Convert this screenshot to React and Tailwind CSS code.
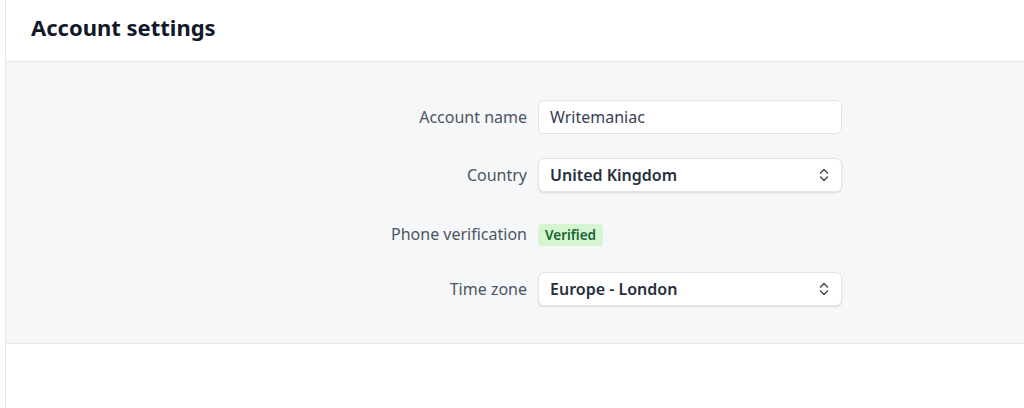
import React from 'react'

function Chevrons() {
  return (
    <svg width="12" height="16" viewBox="0 0 12 16" fill="none" stroke="#4b5563" strokeWidth="1.6" strokeLinecap="round" strokeLinejoin="round">
      <path d="M2.5 6 6 2.5 9.5 6" />
      <path d="M2.5 10 6 13.5 9.5 10" />
    </svg>
  )
}

function Row({ label, children, className = '' }) {
  return (
    <div className={`flex items-center ${className}`}>
      <div className="w-[532px] pr-[11px] text-right text-[16px] text-[#4b5563]">{label}</div>
      <div className="w-[304px]">{children}</div>
    </div>
  )
}

function Select({ value }) {
  return (
    <div className="flex h-[34px] items-center justify-between rounded-[6px] border border-[#e2e4e8] bg-white pl-[11px] pr-[11px] shadow-[0_1px_2px_rgba(0,0,0,0.12)]">
      <span className="text-[16px] font-semibold text-[#27303d]">{value}</span>
      <Chevrons />
    </div>
  )
}

export default function App() {
  return (
    <div className="h-[408px] w-[1024px] bg-white pl-[5px]" style={{ fontFamily: '"Noto Sans", "Open Sans", sans-serif' }}>
      <div className="h-full border-l border-[#e5e7eb]">
        <div className="flex h-[62px] items-center border-b border-[#e5e7eb] pl-[25px] pb-[7px]">
          <h1 className="text-[22px] font-bold text-[#111827]">Account settings</h1>
        </div>
        <div className="h-[282px] border-b border-[#e5e7eb] bg-[#f6f7f9] pt-[38px]">
          <Row label="Account name">
            <div className="flex h-[34px] items-center rounded-[6px] border border-[#e2e4e8] bg-white pl-[11px] text-[16px] text-[#374151]">
              Writemaniac
            </div>
          </Row>
          <Row label="Country" className="mt-[24px]">
            <Select value="United Kingdom" />
          </Row>
          <Row label="Phone verification" className="mt-[25px] h-[34px]">
            <span className="inline-flex h-[22px] items-center rounded-[4px] bg-[#d4f5cf] px-[7px] text-[13.5px] font-semibold text-[#166534]">
              Verified
            </span>
          </Row>
          <Row label="Time zone" className="mt-[21px]">
            <Select value="Europe - London" />
          </Row>
        </div>
      </div>
    </div>
  )
}
